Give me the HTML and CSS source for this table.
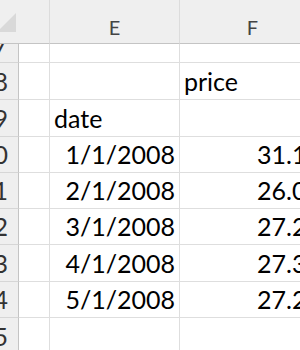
FILE: index.html
```html
<!DOCTYPE html>
<html>
<head>
<meta charset="utf-8">
<link rel="stylesheet" href="styles.css">
</head>
<body>
<div class="sheet">
  <div class="hdr corner">
    <svg class="tri" width="19" height="44" viewBox="0 0 19 44"><polygon points="16,13 16,32 -3,32" fill="#d9d9d9"/></svg>
  </div>
  <div class="hdr col"></div>
  <div class="hdr col">E</div>
  <div class="hdr col">F</div>

  <div class="rh">17</div><div class="c"></div><div class="c"></div><div class="c"></div>
  <div class="rh">18</div><div class="c"></div><div class="c"></div><div class="c">price</div>
  <div class="rh">19</div><div class="c"></div><div class="c">date</div><div class="c"></div>
  <div class="rh">20</div><div class="c"></div><div class="c num">1/1/2008</div><div class="c num">31.13</div>
  <div class="rh">21</div><div class="c"></div><div class="c num">2/1/2008</div><div class="c num">26.07</div>
  <div class="rh">22</div><div class="c"></div><div class="c num">3/1/2008</div><div class="c num">27.21</div>
  <div class="rh">23</div><div class="c"></div><div class="c num">4/1/2008</div><div class="c num">27.34</div>
  <div class="rh">24</div><div class="c"></div><div class="c num">5/1/2008</div><div class="c num">27.25</div>
  <div class="rh">25</div><div class="c"></div><div class="c"></div><div class="c"></div>
</div>
</body>
</html>
```

FILE: styles.css
```css
html, body {
  margin: 0;
  padding: 0;
  background: #ffffff;
  overflow: hidden;
}
.sheet {
  width: 300px;
  height: 350px;
  overflow: hidden;
  display: grid;
  grid-template-columns: 19px 31px 130px 146px;
  grid-template-rows: 44px 19px 37px 37px 36px 36px 36px 37px 36px 37px;
  font-family: Lato, "Liberation Sans", sans-serif;
  font-size: 25px;
  line-height: 25px;
  color: #000000;
}
.hdr {
  background: #efefef;
  border-bottom: 1px solid #c4c4c4;
  box-sizing: border-box;
  position: relative;
}
.corner {
  overflow: hidden;
}
.tri {
  position: absolute;
  left: 0;
  top: 0;
}
.col {
  border-right: 1px solid #dcdcdc;
  display: flex;
  justify-content: center;
  align-items: flex-end;
  padding-bottom: 6px;
  font-size: 20px;
  line-height: 20px;
  color: #444444;
}
.rh {
  background: #efefef;
  border-right: 1px solid #c4c4c4;
  border-bottom: 1px solid #d6d6d6;
  box-sizing: border-box;
  display: flex;
  justify-content: flex-end;
  align-items: flex-end;
  padding-right: 10px;
  padding-bottom: 5px;
  overflow: hidden;
  white-space: nowrap;
  color: #333333;
}
.c {
  border-right: 1px solid #dedede;
  border-bottom: 1px solid #dedede;
  box-sizing: border-box;
  display: flex;
  align-items: flex-end;
  padding: 0 4px 5px 4px;
  overflow: hidden;
  white-space: nowrap;
}
.num {
  justify-content: flex-end;
}
```
